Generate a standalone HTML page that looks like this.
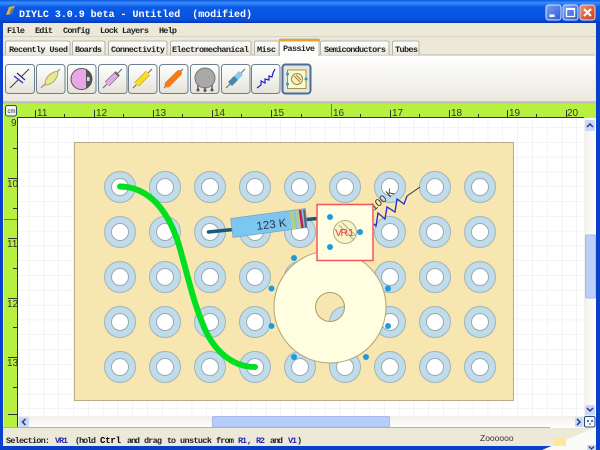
<!DOCTYPE html>
<html><head><meta charset="utf-8"><style>
html,body{margin:0;padding:0;background:#ece9d8;overflow:hidden}
svg{display:block}
.m{font-family:"Liberation Mono",monospace;font-size:8.5px;fill:#222;font-weight:bold}
.r{font-family:"Liberation Sans",sans-serif;font-size:10px;fill:#333}
</style></head><body>
<svg width="600" height="450" viewBox="0 0 600 450" xmlns="http://www.w3.org/2000/svg">
<defs>
<linearGradient id="tb" x1="0" y1="0" x2="0" y2="1"><stop offset="0" stop-color="#0a5ae6"/><stop offset=".12" stop-color="#3c8cf8"/><stop offset=".3" stop-color="#0a5ce8"/><stop offset=".85" stop-color="#0850dc"/><stop offset="1" stop-color="#0436b8"/></linearGradient>
<linearGradient id="pane" x1="0" y1="0" x2="0" y2="1"><stop offset="0" stop-color="#fff"/><stop offset="1" stop-color="#ece9de"/></linearGradient>
<linearGradient id="btn" x1="0" y1="0" x2="0" y2="1"><stop offset="0" stop-color="#fff"/><stop offset="1" stop-color="#e4e2d8"/></linearGradient>
<linearGradient id="tab" x1="0" y1="0" x2="0" y2="1"><stop offset="0" stop-color="#fff"/><stop offset="1" stop-color="#e8e6da"/></linearGradient>
<linearGradient id="trk" x1="0" y1="0" x2="0" y2="1"><stop offset="0" stop-color="#f0efe8"/><stop offset="1" stop-color="#fff"/></linearGradient>
<linearGradient id="vtrk" x1="0" y1="0" x2="1" y2="0"><stop offset="0" stop-color="#f3f1ea"/><stop offset="1" stop-color="#fff"/></linearGradient>
<linearGradient id="blue" x1="0" y1="0" x2="1" y2="1"><stop offset="0" stop-color="#7aa2f0"/><stop offset="1" stop-color="#2a58d8"/></linearGradient>
<linearGradient id="red" x1="0" y1="0" x2="1" y2="1"><stop offset="0" stop-color="#f09070"/><stop offset="1" stop-color="#d03a18"/></linearGradient>
<pattern id="grid" x="14.6" y="113" width="14.8" height="14.8" patternUnits="userSpaceOnUse"><path d="M14.8 0V14.8H0" fill="none" stroke="#e9e9ef" stroke-width="1"/></pattern>
<clipPath id="hole"><circle cx="330" cy="307" r="14.5"/></clipPath>
</defs>

<!-- window frame -->
<rect width="600" height="450" fill="#0a48d0"/>
<rect x="0" y="0" width="600" height="23" fill="url(#tb)"/>
<rect x="3" y="23" width="593" height="423" fill="#ece9d8"/>
<rect x="0" y="23" width="3" height="427" fill="#0a40d0"/>
<rect x="596" y="23" width="4" height="427" fill="#0a40c8"/>
<rect x="0" y="446" width="600" height="4" fill="#0a40c8"/>

<!-- title -->
<path d="M6 15 L9 7 L15 6 L13 9 L12 14 Z" fill="#f0b030"/>
<path d="M9 15 L11 9 L15 7 L12 14Z" fill="#5a7a9a"/>
<text x="19" y="17" style="font-family:'Liberation Mono',monospace;font-size:10px;font-weight:bold;fill:#fff" xml:space="preserve" textLength="233">DIYLC 3.0.9 beta - Untitled  (modified)</text>

<!-- window buttons -->
<rect x="546" y="5" width="15" height="15" rx="2.5" fill="url(#blue)" stroke="#dbe6fb"/>
<rect x="549.500" y="14.500" width="5" height="2.500" fill="#fff"/>
<rect x="563" y="5" width="15" height="15" rx="2.5" fill="url(#blue)" stroke="#dbe6fb"/>
<rect x="566.500" y="8.500" width="8" height="8" fill="none" stroke="#fff" stroke-width="1.300"/>
<rect x="566" y="8" width="9" height="2" fill="#fff"/>
<rect x="580" y="5" width="15" height="15" rx="2.5" fill="url(#red)" stroke="#f4d8cc"/>
<path d="M584 9 L591 16 M591 9 L584 16" stroke="#fff" stroke-width="2"/>

<!-- menu -->
<rect x="3" y="36" width="593" height="1" fill="#d8d4c4"/>
<text class="m" x="7" y="33" textLength="18">File</text>
<text class="m" x="35" y="33" textLength="18">Edit</text>
<text class="m" x="63" y="33" textLength="27">Config</text>
<text class="m" x="100" y="33" textLength="49">Lock Layers</text>
<text class="m" x="159" y="33" textLength="18">Help</text>

<!-- content pane -->
<rect x="3" y="55" width="592" height="46" fill="url(#pane)"/>
<rect x="3" y="54.500" width="592" height="1" fill="#b8b8ac"/>
<rect x="3" y="101" width="593" height="3" fill="#c4c4be"/>

<!-- tabs -->
<g fill="url(#tab)" stroke="#b4b4a8" stroke-width="1">
<path d="M5.500 55V43q0-2 2-2H68q2 0 2 2V55"/>
<path d="M72.500 55V43q0-2 2-2H103q2 0 2 2V55"/>
<path d="M108.500 55V43q0-2 2-2H165q2 0 2 2V55"/>
<path d="M170.500 55V43q0-2 2-2H249q2 0 2 2V55"/>
<path d="M254.500 55V43q0-2 2-2H277q2 0 2 2V55"/>
<path d="M320.500 55V43q0-2 2-2H387q2 0 2 2V55"/>
<path d="M392.500 55V43q0-2 2-2H417q2 0 2 2V55"/>
</g>
<path d="M279.500 56V41q0-2 2-2H317q2 0 2 2V56" fill="#fdfdfb" stroke="#b8b8ac"/>
<rect x="279" y="39" width="41" height="2.500" fill="#f0a020"/>
<text class="m" x="9" y="52" textLength="59">Recently Used</text>
<text class="m" x="75" y="52" textLength="27">Boards</text>
<text class="m" x="111" y="52" textLength="54">Connectivity</text>
<text class="m" x="172" y="52" textLength="77">Electromechanical</text>
<text class="m" x="257" y="52" textLength="19">Misc</text>
<text class="m" x="283" y="51" textLength="32">Passive</text>
<text class="m" x="324" y="52" textLength="62">Semiconductors</text>
<text class="m" x="395" y="52" textLength="23">Tubes</text>

<!-- toolbar buttons -->
<g fill="url(#btn)" stroke="#6c8090" stroke-width="1">
<rect x="5.500" y="64.500" width="29" height="29" rx="3"/>
<rect x="36.500" y="64.500" width="28.500" height="29" rx="3"/>
<rect x="67.500" y="64.500" width="28.500" height="29" rx="3"/>
<rect x="98.500" y="64.500" width="28.500" height="29" rx="3"/>
<rect x="128.500" y="64.500" width="28.500" height="29" rx="3"/>
<rect x="159.500" y="64.500" width="28.500" height="29" rx="3"/>
<rect x="190.500" y="64.500" width="28.500" height="29" rx="3"/>
<rect x="221.500" y="64.500" width="28.500" height="29" rx="3"/>
<rect x="251.500" y="64.500" width="28.500" height="29" rx="3"/>
</g>
<rect x="282.500" y="64.500" width="28" height="29" rx="3" fill="#e8e6da" stroke="#4c6c98" stroke-width="2"/>

<!-- capacitor icon -->
<path d="M10 88 L18.500 79.500 M21 77 L29 69" stroke="#444" stroke-width="1"/>
<path d="M14 76 L23 83 M17 73 L25 80" stroke="#2a2ab0" stroke-width="1.300"/>
<!-- leaf icon -->
<path d="M41 88 L46 83 M55 74 L60 69" stroke="#888" stroke-width="1"/>
<path d="M45 85 C45 77 51 72 58 71 C58 79 52 85 45 85Z" fill="#ece890" stroke="#a8a878"/>
<!-- disc icon -->
<circle cx="81.500" cy="79" r="10.500" fill="#e8a8e8" stroke="#555" stroke-width="1"/>
<path d="M86 69.500 A10.500 10.500 0 0 1 86 88.500Z" fill="#555"/>
<rect x="87" y="77" width="2.500" height="4" fill="#ddd"/>
<!-- pink -->
<path d="M103 88 L122 69" stroke="#666"/>
<path d="M107 84 L117.500 73.500" stroke="#555" stroke-width="6"/>
<path d="M107 84 L117.500 73.500" stroke="#e4a8ec" stroke-width="5"/>
<path d="M115 72 L119 76" stroke="#666" stroke-width="2"/>
<!-- yellow -->
<path d="M133 88 L152 69" stroke="#666"/>
<path d="M136.500 84.500 L148 73" stroke="#a89010" stroke-width="6"/>
<path d="M136.500 84.500 L148 73" stroke="#fadc20" stroke-width="5"/>
<!-- orange -->
<path d="M164 88 L183 69" stroke="#666"/>
<path d="M167.500 84.500 L179 73" stroke="#f47a18" stroke-width="6" stroke-linecap="round"/>
<!-- pot -->
<circle cx="205" cy="78" r="10" fill="#a8a8a8" stroke="#777"/>
<path d="M198 85 V90 M205 87 V90 M212 85 V90" stroke="#666" stroke-width="1.500"/>
<circle cx="198" cy="90" r="1.500" fill="#555"/><circle cx="205" cy="90.500" r="1.500" fill="#555"/><circle cx="212" cy="90" r="1.500" fill="#555"/>
<!-- blue diode -->
<path d="M226 88 L245 69" stroke="#666"/>
<path d="M230 84 L241 73" stroke="#8cc8ec" stroke-width="5.500"/>
<path d="M230 84 L236 78" stroke="#4a84a8" stroke-width="5.500"/>
<!-- zigzag -->
<path d="M257 88 L261 85 L261 81 L265 83 L265 79 L269 80 L269 76 L272 77 L273 73 L275 69" fill="none" stroke="#2020c8" stroke-width="1.200"/>
<!-- pot board -->
<rect x="287.500" y="70" width="18.500" height="18.500" fill="#fffacc" stroke="#a09050"/>
<circle cx="297" cy="79" r="5.500" fill="#f8f0c0" stroke="#998850"/>
<path d="M294 76 L300 82 M296 75 L301 80" stroke="#998850"/>
<circle cx="287.500" cy="74" r="1.500" fill="#1ca0c8"/><circle cx="287.500" cy="84" r="1.500" fill="#1ca0c8"/><circle cx="306" cy="79" r="1.500" fill="#1ca0c8"/>

<!-- rulers -->
<rect x="4" y="104" width="592" height="14" fill="#b8f040"/>
<rect x="4" y="104" width="13" height="323" fill="#b8f040"/>
<rect x="17" y="117" width="567" height="1" fill="#333"/>
<rect x="17" y="118" width="1" height="309" fill="#333"/>
<rect x="5.500" y="105.500" width="11" height="10.500" rx="2" fill="#f4f4f4" stroke="#2a4a7a"/>
<text x="7.500" y="113" style="font-family:'Liberation Sans',sans-serif;font-size:6px;fill:#222">cm</text>

<g stroke="#333" stroke-width="1">
<path d="M35.500 110V118M94.500 110V118M153.500 110V118M212.500 110V118M271.500 110V118M390.500 110V118M449.500 110V118M507.500 110V118M566.500 110V118"/>
<path d="M64.500 114V118M123.500 114V118M182.500 114V118M241.500 114V118M301.500 114V118M360.500 114V118M419.500 114V118M478.500 114V118M536.500 114V118"/>
<path d="M8 178.500H17M8 238.500H17M8 298.500H17M8 357.500H17M8 414.500H17"/>
<path d="M13 148.500H17M13 208.500H17M13 268.500H17M13 327.500H17M13 387.500H17"/>
</g>
<rect x="331" y="104" width="1" height="14" fill="#e05020"/>
<rect x="4" y="219" width="13" height="1" fill="#e04820"/>
<g>
<text class="r" x="37" y="116">11</text><text class="r" x="96" y="116">12</text><text class="r" x="155" y="116">13</text><text class="r" x="214" y="116">14</text><text class="r" x="273" y="116">15</text><text class="r" x="333" y="116">16</text><text class="r" x="392" y="116">17</text><text class="r" x="451" y="116">18</text><text class="r" x="509" y="116">19</text><text class="r" x="567" y="116">20</text>
<text class="r" x="11" y="126">9</text><text class="r" x="7" y="187">10</text><text class="r" x="7" y="247">11</text><text class="r" x="7" y="307">12</text><text class="r" x="7" y="366">13</text>
</g>

<!-- canvas -->
<rect x="18" y="118" width="566" height="298" fill="#fff"/>
<rect x="18" y="118" width="566" height="298" fill="url(#grid)"/>

<!-- board -->
<rect x="74.500" y="142.500" width="439" height="258" fill="#f8e6b0" stroke="#b8ac88"/>
<g fill="#c0dcea" stroke="#a0b4b8" stroke-width="1">
<circle cx="120" cy="187" r="15.500"/><circle cx="165" cy="187" r="15.500"/><circle cx="210" cy="187" r="15.500"/><circle cx="255" cy="187" r="15.500"/><circle cx="300" cy="187" r="15.500"/><circle cx="345" cy="187" r="15.500"/><circle cx="390" cy="187" r="15.500"/><circle cx="435" cy="187" r="15.500"/><circle cx="480" cy="187" r="15.500"/>
<circle cx="120" cy="232" r="15.500"/><circle cx="165" cy="232" r="15.500"/><circle cx="210" cy="232" r="15.500"/><circle cx="255" cy="232" r="15.500"/><circle cx="300" cy="232" r="15.500"/><circle cx="345" cy="232" r="15.500"/><circle cx="390" cy="232" r="15.500"/><circle cx="435" cy="232" r="15.500"/><circle cx="480" cy="232" r="15.500"/>
<circle cx="120" cy="277" r="15.500"/><circle cx="165" cy="277" r="15.500"/><circle cx="210" cy="277" r="15.500"/><circle cx="255" cy="277" r="15.500"/><circle cx="300" cy="277" r="15.500"/><circle cx="345" cy="277" r="15.500"/><circle cx="390" cy="277" r="15.500"/><circle cx="435" cy="277" r="15.500"/><circle cx="480" cy="277" r="15.500"/>
<circle cx="120" cy="322" r="15.500"/><circle cx="165" cy="322" r="15.500"/><circle cx="210" cy="322" r="15.500"/><circle cx="255" cy="322" r="15.500"/><circle cx="300" cy="322" r="15.500"/><circle cx="345" cy="322" r="15.500"/><circle cx="390" cy="322" r="15.500"/><circle cx="435" cy="322" r="15.500"/><circle cx="480" cy="322" r="15.500"/>
<circle cx="120" cy="367" r="15.500"/><circle cx="165" cy="367" r="15.500"/><circle cx="210" cy="367" r="15.500"/><circle cx="255" cy="367" r="15.500"/><circle cx="300" cy="367" r="15.500"/><circle cx="345" cy="367" r="15.500"/><circle cx="390" cy="367" r="15.500"/><circle cx="435" cy="367" r="15.500"/><circle cx="480" cy="367" r="15.500"/>
</g>
<g fill="#fff" stroke="#98aab0" stroke-width="1">
<circle cx="120" cy="187" r="8.500"/><circle cx="165" cy="187" r="8.500"/><circle cx="210" cy="187" r="8.500"/><circle cx="255" cy="187" r="8.500"/><circle cx="300" cy="187" r="8.500"/><circle cx="345" cy="187" r="8.500"/><circle cx="390" cy="187" r="8.500"/><circle cx="435" cy="187" r="8.500"/><circle cx="480" cy="187" r="8.500"/>
<circle cx="120" cy="232" r="8.500"/><circle cx="165" cy="232" r="8.500"/><circle cx="210" cy="232" r="8.500"/><circle cx="255" cy="232" r="8.500"/><circle cx="300" cy="232" r="8.500"/><circle cx="345" cy="232" r="8.500"/><circle cx="390" cy="232" r="8.500"/><circle cx="435" cy="232" r="8.500"/><circle cx="480" cy="232" r="8.500"/>
<circle cx="120" cy="277" r="8.500"/><circle cx="165" cy="277" r="8.500"/><circle cx="210" cy="277" r="8.500"/><circle cx="255" cy="277" r="8.500"/><circle cx="300" cy="277" r="8.500"/><circle cx="345" cy="277" r="8.500"/><circle cx="390" cy="277" r="8.500"/><circle cx="435" cy="277" r="8.500"/><circle cx="480" cy="277" r="8.500"/>
<circle cx="120" cy="322" r="8.500"/><circle cx="165" cy="322" r="8.500"/><circle cx="210" cy="322" r="8.500"/><circle cx="255" cy="322" r="8.500"/><circle cx="300" cy="322" r="8.500"/><circle cx="345" cy="322" r="8.500"/><circle cx="390" cy="322" r="8.500"/><circle cx="435" cy="322" r="8.500"/><circle cx="480" cy="322" r="8.500"/>
<circle cx="120" cy="367" r="8.500"/><circle cx="165" cy="367" r="8.500"/><circle cx="210" cy="367" r="8.500"/><circle cx="255" cy="367" r="8.500"/><circle cx="300" cy="367" r="8.500"/><circle cx="345" cy="367" r="8.500"/><circle cx="390" cy="367" r="8.500"/><circle cx="435" cy="367" r="8.500"/><circle cx="480" cy="367" r="8.500"/>
</g>

<!-- big pot -->
<circle cx="330" cy="307" r="56" fill="#fffee0" stroke="#b0a470" stroke-width="1"/>
<circle cx="330" cy="307" r="14.500" fill="#f8e6b0"/>
<g clip-path="url(#hole)"><circle cx="345" cy="322" r="15.500" fill="#c0dcea" stroke="#a0b4b8"/></g>
<circle cx="330" cy="307" r="14.500" fill="none" stroke="#a89c68"/>

<!-- zigzag resistor -->
<path d="M374 224 L376 226 L378 213 L385 219 L387 207 L395 212 L397 199 L404 204 L407 196" fill="none" stroke="#2828d0" stroke-width="1.300"/>
<path d="M407 196 L420 187" stroke="#333" stroke-width="1"/>
<text x="374" y="211" transform="rotate(-40 374 211)" style="font-family:'Liberation Sans',sans-serif;font-size:10.5px;fill:#333">100 K</text>

<!-- resistor -->
<path d="M208.500 232 L233 229.500 M306 219.500 L318 218.500" stroke="#1c5878" stroke-width="3.500" stroke-linecap="round"/>
<path d="M230.700 218.500 L305.500 208.500 L307 227.500 L233 237.500Z" fill="#7cc6f2" stroke="#7ca0b8" stroke-width=".7"/>
<path d="M291.500 211 L294 229.500" stroke="#b8cc88" stroke-width="4"/>
<path d="M297 210 L299.500 228.500" stroke="#b8cc88" stroke-width="3"/>
<path d="M300 210 L302.500 228" stroke="#c02050" stroke-width="2.500"/>
<path d="M304 209.500 L306 227.500" stroke="#606070" stroke-width="2"/>
<text x="257" y="230" transform="rotate(-7 257 230)" style="font-family:'Liberation Sans',sans-serif;font-size:11.5px;fill:#334">123 K</text>

<!-- wire -->
<path d="M120 186.500 C 150 187 168 212 178 242 C 186 268 192 298 202 322 C 212 350 232 367 255 367" fill="none" stroke="#00e020" stroke-width="6" stroke-linecap="round"/>

<!-- VR1 -->
<rect x="317" y="204.500" width="56" height="56" fill="#fffee2" stroke="#f05858" stroke-width="1.500"/>
<circle cx="345" cy="232" r="11.500" fill="#f8f4cc" stroke="#b4ac80"/>
<path d="M339 225 L354 240 M342 222.500 L356 236" stroke="#b4ac80"/>
<text x="335" y="236" style="font-family:'Liberation Sans',sans-serif;font-size:10.500px;fill:#e84040" textLength="19">VR 1</text>

<g fill="#1c9cdc">
<circle cx="330" cy="217" r="3"/><circle cx="360" cy="232" r="3"/><circle cx="330" cy="247" r="3"/>
<circle cx="294" cy="258" r="3"/><circle cx="271.500" cy="288.500" r="3"/><circle cx="388" cy="288.500" r="3"/>
<circle cx="271.500" cy="326" r="3"/><circle cx="388" cy="326" r="3"/><circle cx="294" cy="357" r="3"/><circle cx="366" cy="357" r="3"/>
</g>

<!-- scrollbars -->
<rect x="18" y="416" width="566" height="12" fill="url(#trk)"/>
<rect x="19" y="417" width="10" height="10" rx="1.500" fill="#c8d8f8"/>
<path d="M25.500 419 L22.500 422 L25.500 425" fill="none" stroke="#2a3a80" stroke-width="1.500"/>
<rect x="212.500" y="416.500" width="177" height="10.500" rx="1" fill="#b8ccf8" stroke="#a8bcec"/>
<rect x="575" y="417" width="8.500" height="10" rx="1.500" fill="#c8d8f8"/>
<path d="M577 419 L580 422 L577 425" fill="none" stroke="#2a3a80" stroke-width="1.500"/>
<rect x="584" y="118" width="12" height="298" fill="url(#vtrk)"/>
<rect x="585" y="120" width="10" height="11" rx="1.500" fill="#c8d8f8"/>
<path d="M587 127 L590 124 L593 127" fill="none" stroke="#2a3a80" stroke-width="1.500"/>
<rect x="585" y="405" width="10" height="10.500" rx="1.500" fill="#c8d8f8"/>
<path d="M587 408 L590 411 L593 408" fill="none" stroke="#2a3a80" stroke-width="1.500"/>
<rect x="585.500" y="235" width="10" height="63" rx="1" fill="#bccffa" stroke="#a8bcec"/>
<rect x="584" y="416" width="12" height="12" fill="#fff"/>
<rect x="584.500" y="416.500" width="10.500" height="10.500" rx="1.500" fill="#f4f4f4" stroke="#2a4a7a"/>
<circle cx="588" cy="421" r="1" fill="#2a4a7a"/><circle cx="592" cy="421" r="1" fill="#2a4a7a"/><rect x="589.500" y="423" width="1" height="2" fill="#2a4a7a"/>

<!-- status bar -->
<rect x="3" y="427" width="547" height="1" fill="#b4b4a8"/>
<rect x="3" y="428" width="593" height="18" fill="#ece9d8"/>
<g style="font-family:'Liberation Mono',monospace;font-size:8.500px;font-weight:bold;fill:#222">
<text x="6" y="443" textLength="44">Selection:</text>
<text x="55" y="443" style="fill:#2828b0" textLength="13">VR1</text>
<text x="75" y="443" textLength="21">(hold</text>
<text x="100" y="443" style="font-size:9px;fill:#000" textLength="21">Ctrl</text>
<text x="127" y="443" textLength="13">and</text>
<text x="144" y="443" textLength="18">drag</text>
<text x="167" y="443" textLength="9">to</text>
<text x="180" y="443" textLength="32">unstuck</text>
<text x="216" y="443" textLength="18">from</text>
<text x="238" y="443" style="fill:#2828b0" textLength="9">R1</text>
<text x="247" y="443">,</text>
<text x="256" y="443" style="fill:#2828b0" textLength="9">R2</text>
<text x="270" y="443" textLength="13">and</text>
<text x="288" y="443" style="fill:#2828b0" textLength="9">V1</text>
<text x="297" y="443">)</text>
</g>
<text x="480" y="441" style="font-family:'Liberation Sans',sans-serif;font-size:8.500px;fill:#333">Zoooooo</text>
<path d="M542 450 L596 427 V450 Z" fill="#fafaf6"/>
<rect x="553" y="438" width="13" height="8" fill="#f8e8a0"/>
<rect x="587" y="445" width="9" height="5" fill="#c8d8f8"/>
<path d="M589 446.500 L591.500 449 L594 446.500" fill="none" stroke="#2a3a80" stroke-width="1.300"/>
</svg>
</body></html>
